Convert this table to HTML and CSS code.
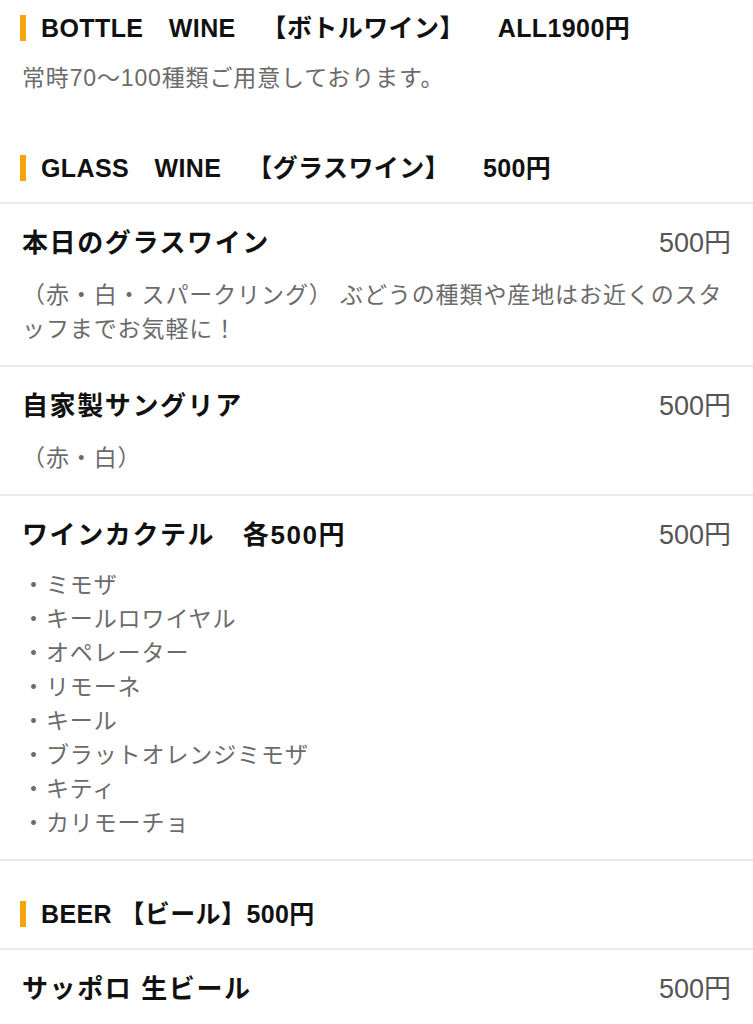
FILE: index.html
```html
<!DOCTYPE html>
<html lang="ja">
<head>
<meta charset="utf-8">
<title>Drink Menu</title>
<link rel="stylesheet" href="styles.css">
</head>
<body>
<section class="cat">
  <h2 class="cat-head"><span class="cat-title">BOTTLE　WINE　<span class="head-ja">【ボトルワイン】</span>　<span class="head-price">ALL1900円</span></span></h2>
  <p class="cat-intro">常時70〜100種類ご用意しております。</p>
</section>

<section class="cat">
  <h2 class="cat-head"><span class="cat-title">GLASS　WINE　<span class="head-ja">【グラスワイン】</span>　<span class="head-price">500円</span></span></h2>
  <div class="item">
    <div class="item-row">
      <h3 class="item-name">本日のグラスワイン</h3>
      <span class="item-price">500円</span>
    </div>
    <p class="item-desc">（赤・白・スパークリング） ぶどうの種類や産地はお近くのスタッフまでお気軽に！</p>
  </div>
  <div class="item">
    <div class="item-row">
      <h3 class="item-name">自家製サングリア</h3>
      <span class="item-price">500円</span>
    </div>
    <p class="item-desc">（赤・白）</p>
  </div>
  <div class="item">
    <div class="item-row">
      <h3 class="item-name">ワインカクテル　各500円</h3>
      <span class="item-price">500円</span>
    </div>
    <ul class="item-list">
      <li>・ミモザ</li>
      <li>・キールロワイヤル</li>
      <li>・オペレーター</li>
      <li>・リモーネ</li>
      <li>・キール</li>
      <li>・ブラットオレンジミモザ</li>
      <li>・キティ</li>
      <li>・カリモーチョ</li>
    </ul>
  </div>
</section>

<section class="cat cat-spaced">
  <h2 class="cat-head"><span class="cat-title">BEER 【ビール】500円</span></h2>
  <div class="item">
    <div class="item-row">
      <h3 class="item-name">サッポロ 生ビール</h3>
      <span class="item-price">500円</span>
    </div>
  </div>
</section>
</body>
</html>
```

FILE: styles.css
```css
html, body {
  margin: 0;
  padding: 0;
  background: #ffffff;
}

body {
  font-family: "Liberation Sans", "Noto Sans CJK JP", sans-serif;
  color: #1a1a1a;
}

.cat-head {
  display: flex;
  align-items: center;
  margin: 0;
  padding: 8px 20px 14px;
  font-size: 25px;
  line-height: 40px;
  font-weight: 700;
  letter-spacing: 0.4px;
  color: #111111;
}

.cat-head::before {
  content: "";
  flex: none;
  width: 6px;
  height: 26px;
  margin-right: 15px;
  background: #f5a60f;
}

.cat-title {
  white-space: pre;
}

.head-ja {
  margin-left: 13px;
}

.head-price {
  margin-left: 20px;
}

.cat-intro {
  margin: 0 22px 45px;
  font-size: 23px;
  line-height: 33px;
  letter-spacing: 0.85px;
  color: #6b6b6b;
}

.cat-spaced {
  padding-top: 25px;
}

.item {
  border-top: 2px solid #e9e9e9;
  padding: 21px 22px 19px;
}

.item:last-child {
  border-bottom: 2px solid #e9e9e9;
}

.cat-spaced .item:last-child {
  border-bottom: none;
}

.item-row {
  display: flex;
  justify-content: space-between;
  align-items: center;
}

.item-name {
  margin: 0;
  font-size: 26px;
  line-height: 36px;
  font-weight: 700;
  letter-spacing: 1.6px;
  color: #111111;
}

.item-price {
  font-size: 27px;
  line-height: 36px;
  color: #555555;
}

.item-desc {
  margin: 17px 0 0;
  font-size: 23px;
  line-height: 34px;
  letter-spacing: 0.9px;
  color: #6b6b6b;
}

.item-list {
  list-style: none;
  margin: 15px 0 0;
  padding: 0;
  font-size: 23px;
  line-height: 34px;
  letter-spacing: 0.9px;
  color: #6b6b6b;
}
```
